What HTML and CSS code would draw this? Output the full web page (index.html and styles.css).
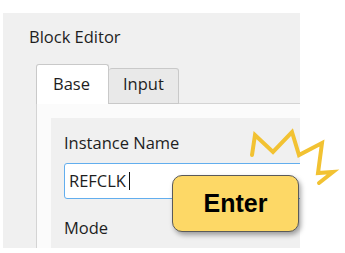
FILE: index.html
```html
<!DOCTYPE html>
<html lang="en">
  <head>
    <meta charset="UTF-8" />
    <meta name="viewport" content="width=device-width, initial-scale=1.0" />
    <title>Block Editor</title>
    <link rel="stylesheet" href="styles.css">
  </head>
  <body>
    <div class="window">
      <h1 class="title">Block Editor</h1>

      <!-- Tab strip -->
      <div class="tabs">
        <div class="tab active">Base</div>
        <div class="tab">Input</div>
        <div class="tab-fill"></div>
      </div>

      <div class="tab-panel">
        <div class="form">
          <label class="field-label">Instance Name</label>
          <div class="text-input focused">REFCLK<span class="caret"></span></div>
          <label class="field-label">Mode</label>
          <div class="text-input"></div>
        </div>
      </div>
    </div>

    <!-- Callout over the form -->
    <svg class="spark" width="100" height="70" viewBox="0 0 100 70">
      <polyline points="7,30 10,10 28,27 47,7 54,30 77,18 73,48 88,47 74,58"
        fill="none" stroke="#f2c232" stroke-width="4"
        stroke-linejoin="miter" stroke-linecap="round" />
    </svg>
    <div class="key-button">Enter</div>
  </body>
</html>
```

FILE: styles.css
```css
body {
  margin: 0;
  background-color: #ffffff;
  font-family: "Open Sans", "Noto Sans", sans-serif;
  color: #1e1e1e;
}

.window {
  margin: 13px 0 0 3px;
  width: 297px;
  height: 235px;
  background-color: #f0f0f0;
  overflow: hidden;
  box-sizing: border-box;
  padding-top: 13px;
}

.title {
  margin: 0 0 16px 26px;
  font-size: 16.5px;
  font-weight: normal;
  line-height: 22px;
}

.tabs {
  display: flex;
  align-items: flex-end;
  margin-left: 33px;
}

.tab {
  font-size: 16.5px;
  line-height: 22px;
  padding: 4px 14px 8px;
  background-color: #e9e9e9;
  border: 1px solid #c9c9c9;
  border-left: none;
  border-radius: 3px 3px 0 0;
}

.tab.active {
  padding: 8px 18px 9px 16px;
  background-color: #ffffff;
  border-left: 1px solid #c9c9c9;
  border-bottom: none;
}

.tab-fill {
  flex: 1;
  border-bottom: 1px solid #d4d4d4;
}

.tab-panel {
  margin-left: 33px;
  border-left: 1px solid #d4d4d4;
  background-color: #fbfbfb;
  padding: 14px 0 0 14px;
  height: 200px;
}

.form {
  background-color: #f0f0f0;
  padding: 14px 0 0 13px;
  height: 100%;
}

.field-label {
  display: block;
  font-size: 16.5px;
  line-height: 22px;
  margin-bottom: 9px;
}

.text-input {
  width: 260px;
  height: 34px;
  box-sizing: border-box;
  margin-bottom: 18px;
  border: 1px solid #a9a9a9;
  border-radius: 3px;
  background-color: #ffffff;
  padding: 6px 4px;
  font-size: 16.5px;
  line-height: 22px;
  display: flex;
  align-items: center;
}

.text-input.focused {
  height: 36px;
  border-color: #62aeee;
}

.caret {
  display: inline-block;
  width: 1px;
  height: 18px;
  margin-left: 3px;
  background-color: #111;
}

.spark {
  position: absolute;
  left: 245px;
  top: 125px;
}

.key-button {
  position: absolute;
  left: 172px;
  top: 175px;
  width: 127px;
  height: 57px;
  box-sizing: border-box;
  border: 1.5px solid #5a5a5a;
  border-radius: 10px;
  background-color: #fdd866;
  box-shadow: 2px 3px 5px rgba(0, 0, 0, 0.35);
  font-family: "Liberation Sans", Arial, sans-serif;
  font-weight: bold;
  font-size: 25px;
  color: #000;
  display: flex;
  align-items: center;
  justify-content: center;
}
```
